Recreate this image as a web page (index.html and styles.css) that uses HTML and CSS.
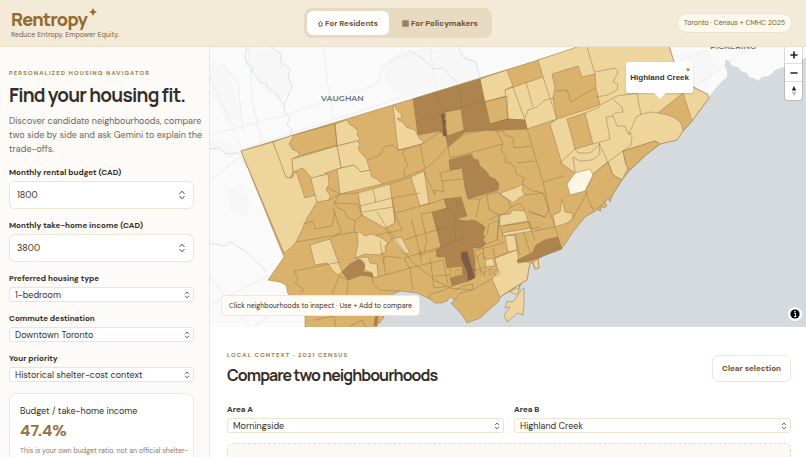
FILE: index.html
```html
<!DOCTYPE html>
<html lang="en">
<head>
<meta charset="utf-8">
<title>Rentropy</title>
<link rel="stylesheet" href="styles.css">
</head>
<body>
<svg class="defs" aria-hidden="true">
  <symbol id="updown" viewBox="0 0 6 10"><path d="M.8 3.6 3 1.2l2.2 2.4M.8 6.4 3 8.8l2.2-2.4" fill="none" stroke="#4a443c" stroke-width="1" stroke-linecap="round" stroke-linejoin="round"/></symbol>
</svg>
<header class="topbar">
  <div class="brand">
    <div class="brand-name">Rentropy<svg class="spark" viewBox="0 0 8 8" aria-hidden="true"><path d="M4 0 5.3 2.7 8 4 5.3 5.3 4 8 2.7 5.3 0 4 2.7 2.7Z"/></svg></div>
    <div class="tagline">Reduce Entropy. Empower Equity.</div>
  </div>
  <nav class="tabs">
    <button class="tab tab-active" type="button"><svg class="tab-icon" viewBox="0 0 5 7" aria-hidden="true"><path d="M.3 3.7 2.5 1.5l2.2 2.2M1 3.2v2.9h3V3.2" fill="none" stroke="currentColor" stroke-width=".9"/></svg>For Residents</button>
    <button class="tab" type="button"><svg class="tab-icon tab-icon-wide" viewBox="0 0 7 7" aria-hidden="true"><path d="M.5.5h6v6h-6z" fill="#a58a68"/><path d="M.5 2.5h6M.5 4.5h6M2.5.5v6M4.5.5v6M.5.5h6v6h-6z" stroke="#8b6a45" stroke-width=".4" fill="none"/></svg>For Policymakers</button>
  </nav>
  <span class="source">Toronto · Census + CMHC 2025</span>
</header>
<div class="shell">
  <aside class="sidebar">
    <p class="eyebrow">Personalized housing navigator</p>
    <h1>Find your housing fit.</h1>
    <p class="intro">Discover candidate neighbourhoods, compare two side by side and ask Gemini to explain the trade-offs.</p>
    <form class="fields">
      <div class="field"><label for="rent">Monthly rental budget (CAD)</label><div class="control"><input id="rent" type="number" value="1800"><svg class="chev"><use href="#updown"/></svg></div></div>
      <div class="field"><label for="income">Monthly take-home income (CAD)</label><div class="control"><input id="income" type="number" value="3800"><svg class="chev"><use href="#updown"/></svg></div></div>
      <div class="field"><label for="type">Preferred housing type</label><div class="control"><select id="type"><option>1-bedroom</option></select><svg class="chev chev-small"><use href="#updown"/></svg></div></div>
      <div class="field"><label for="dest">Commute destination</label><div class="control"><select id="dest"><option>Downtown Toronto</option></select><svg class="chev chev-small"><use href="#updown"/></svg></div></div>
      <div class="field"><label for="priority">Your priority</label><div class="control"><select id="priority"><option>Historical shelter-cost context</option></select><svg class="chev chev-small"><use href="#updown"/></svg></div></div>
    </form>
    <section class="ratio">
      <p class="ratio-label">Budget / take-home income</p>
      <p class="ratio-value">47.4%</p>
      <p class="ratio-note">This is your own budget ratio, not an official shelter-cost measure.</p>
    </section>
  </aside>
  <main class="content">
    <section class="map">
      <svg class="map-canvas" viewBox="210 47 596 280" preserveAspectRatio="xMidYMid slice" role="img" aria-label="Toronto neighbourhoods">
        <rect class="land" x="210" y="47" width="596" height="280"/>
        <g class="park">
          <path d="M248 48 280 50 292 80 284 100 262 88 246 66Z"/><path d="M388 60 402 52 452 48 478 62 478 78 400 101 384 80Z"/><path d="M210 58 226 68 244 120 226 120 210 90Z"/><path d="M210 138 232 144 242 152 230 158 210 150Z"/><path d="M226 190 240 184 250 200 246 218 230 210Z"/><path d="M676 55 700 50 720 58 706 88 692 84Z"/>
        </g>
        <g class="roads">
          <path d="M210 135 282 116 340 97 378 84 383 66 410 51"/><path d="M240 150 330 121 372 107 400 98"/><path d="M249 47 252 100 262 142"/><path d="M222 63 238 84 243 130"/><path d="M324 47 326 72 333 119"/><path d="M210 182 238 158"/><path d="M210 305 284 268"/><path d="M210 277 250 327"/><path d="M254 327 300 290"/><path d="M430 47 436 90"/><path d="M390 61 428 48"/><path d="M690 90 720 68 750 47"/><path d="M680 60 716 48"/>
        </g>
        <g class="creeks">
          <path d="M247 47 245 56 247 64 253 67 252 72 258 78 260 83 266 83 268 88 275 93 280 100 284 105 285 112 290 118 287 124 292 130 290 136"/><path d="M271 47 281 54 280 62 290 68 288 78 292 85 289 94 284 105"/><path d="M210 149 220 148 226 154 238 153 243 160 247 168"/><path d="M210 243 224 246 230 242 244 250 252 258 262 266 266 272"/><path d="M410 50 424 60 434 69 444 68 450 76 458 83"/><path d="M458 47 464 58 476 62 480 78"/>
        </g>
        <path class="border-line" d="M210 77 228 115 242 151"/>
        <path class="water" d="M806 58V327H376L385 298 400 291 420 280 500 270 550 240 600 165 660 125 700 101 709 97 716 88 722 81 727 77 727 72 725 67 725 60 729 61 732 66 738 67 741 71 747 73 749 77 754 78 758 81 762 77 769 76 775 70 784 67 786 62 796 60Z"/>
        <text class="place" x="321" y="101">VAUGHAN</text>
        <text class="place" x="710" y="49">PICKERING</text>

        <path class="mid" d="M241 151 409 100 577 48 580 46H669L675 65 683 85 693 87 707 94 709 98 692 121 683 131 677 140 660 144 647 154 630 170 622 180 613 194 610 202 608 198 605 202 607 206 603 208 600 206 601 211 595 209 594 212 585 217 573 232 563 247 543 256 538 259 539 268 535 269 533 264 530 262 527 280 520 284 515 288 500 297 499 301 480 318 467 323 462 315 451 303 455 300 450 297 447 301 442 303 435 303 430 299 417 293 400 291 385 298 378 306 377 328H305V317L298 300 288 294 286 285 280 282 268 280 284 257Z"/>
        <path class="mid" d="M378 316 383 314 384 318 381 320 380 323 377 322Z"/>
        <path class="light" d="M521 283 519 289 514 289 510 292 517 295 521 290 524 288 524 305 523 315 518 313 507 322 504 315 510 307 505 308 507 301 513 302 518 295 520 284Z"/>
        <path class="light" d="M533 262 538 259 539 268 535 269Z"/>

        <g class="light">
          <path d="M241 151 273 142 283 167 286 177 292 178 296 171 305 198 316 195 317 202 307 218 302 230 296 242 292 247 284 253Z"/>
          <path d="M273 142 293 135 292 139 289 144 293 150 297 151 300 155 292 159 293 172 290 178 286 177Z"/>
          <path d="M335 124 347 120 350 125 353 126 358 131 357 135 360 139 357 141 337 146Z"/>
          <path d="M337 146 357 141 360 144 358 149 363 155 366 158 370 170 361 172 354 165 341 168Z"/>
          <path d="M292 159 337 146 341 168 325 173 324 176 320 175 318 178 311 178 305 170 302 168 296 171 293 172Z"/>
          <path d="M311 178 328 174 329 184 326 190 330 195 329 200 317 202 312 183Z"/>
          <path d="M337 169 354 165 361 172 370 170 372 177 377 179 382 184 340 194Z"/>
          <path d="M393 106 395 106 397 110 402 115 401 118 397 119 404 123 406 127 415 130 419 138 425 143 398 150Z"/>
          <path d="M480 79 507 70 513 86 505 90 507 96 484 102Z"/>
          <path d="M505 90 543 77 549 88 555 87 554 98 557 119 527 129 525 120 508 119Z"/>
          <path d="M538 60 580 46H669L675 65 683 85 693 87 707 94 709 98 692 121 683 131 677 140 660 144 655 141 623 151 626 165 628 168 622 180 613 175 608 162 588 178 575 173 562 164 550 124 557 119 543 77Z"/>
          <path d="M411 177 424 171 429 203 420 206Z"/>
          <path d="M358 193 390 184 395 223 385 228 362 215Z"/>
          <path d="M310 245 330 239 342 272 338 275 333 271 327 263 315 265Z"/>
          <path d="M357 233 360 232 365 236 371 234 377 236 382 238 388 243 385 247 386 252 378 255 365 254 355 258 358 243Z"/>
          <path d="M355 258 368 257 370 263 377 264 378 277 372 277 372 273 365 270 364 262Z"/>
          <path d="M392 239 401 237 410 253 405 254Z"/>
          <path d="M495 258 517 250 519 262 530 262 527 280 515 287 500 297 492 279 498 272Z"/>
          <path d="M505 236 515 235 517 250 508 252Z"/>
          <path d="M500 215 510 214 513 210 525 211 528 221 500 226Z"/>
          <path d="M502 233 530 228 532 231 503 236Z"/>
          <path d="M503 192 515 188 523 184 522 190 525 195 519 198 513 203 506 198 500 195Z"/>
          <path d="M562 199 565 212 572 213 573 218 567 223 555 227 553 215 560 212Z"/>
          <path d="M485 260 493 258 495 266 486 267Z"/>
        </g>
        <g class="mid">
          <path d="M552 74 578 66 582 77 595 74 596 88 600 105 557 119 553 98 555 87Z"/>
          <path d="M567 119 585 113 593 144 575 149Z"/>
          <path d="M658 113 683 93 692 121 683 131 682 126 680 122 675 118 668 115Z"/>
          <path d="M623 151 655 141 660 144 647 154 630 170 626 165Z"/>
          <path d="M588 178 608 162 613 175 622 180 613 194 594 212 585 191 593 175Z"/>
        </g>
        <path class="pale" d="M575 173 590 169 593 175 585 191 570 195 567 184Z"/>
        <g class="dark">
          <path d="M413 99 480 79 485 102 490 124 507 119 525 120 527 129 500 130 487 130 465 132 448 147 446 137 440 131 418 135 416 121Z"/>
          <path d="M449 160 471 154 474 159 478 160 480 166 486 171 490 177 495 179 499 184 498 190 485 194 468 199 465 188 462 168 450 170Z"/>
          <path d="M444 199 461 197 467 216 456 219 449 215Z"/>
          <path d="M432 212 447 208 455 218 460 220 467 221 473 220 478 222 485 227 483 235 485 237 483 240 486 244 480 248 472 248 475 260 475 277 468 281 452 286 450 278 463 275 462 266 447 268 445 257 437 257 436 250 441 247Z"/>
          <path d="M517 260 532 253 536 245 545 240 558 237 562 249 543 256 533 260 518 263Z"/>
          <path d="M342 272 350 264 360 259 365 265 363 272 372 273 373 277 362 275 348 280Z"/>
        </g>
        <path class="mid" d="M445 112 461 109 464 130 447 136Z"/>
        <path class="deep" d="M441 114 445 114 444 119 446 121 445 127 447 136 443 136 443 128Z"/>
        <path class="deep" d="M461 252 467 251 472 268 475 278 468 281 467 272 461 258Z"/>
        <path class="dark" d="M375 317 378 315 377 325 374 326Z"/>
        <g class="lines">
          <path d="M436 92 443 114M458 86 462 108M416 121 441 114M445 112 483 101M513 87 525 120M526 82 533 107M525 118 528 110 537 107 545 100 554 98M484 102 507 96 508 119 490 124"/>
          <path d="M293 135 335 124 337 145 302 155M398 150 393 145 385 146 380 155 368 160M398 150 406 149 402 154 406 157 405 161 408 165 404 170 405 177 390 182 382 184M406 149 420 145 425 169M420 145 443 130M405 177 425 169 436 160 448 147 465 134 487 130 505 132"/>
          <path d="M448 147 450 158 503 144 496 130M503 144 501 150 506 156 505 162 511 163 515 168 516 174 525 178 522 183 530 190 543 193M503 134 513 138 514 148 531 146M517 163 535 161M527 129 543 182M543 182 564 176M543 182 549 210M440 173 461 168M440 173 442 181 462 179M442 181 444 192M435 195 435 190 444 192M424 171 435 195"/>
          <path d="M587 47 595 74M595 72 615 68 618 72 613 82 618 84 617 90 608 95 596 97M600 105 617 96 637 93 665 87 680 80M637 93 641 115M613 99 617 103 622 107 623 112 615 113 612 116M606 117 613 116 617 126 625 126 628 134 632 133M606 117 610 139 593 144M632 127 636 117 642 114 650 112 658 113M632 127 629 133 632 137 631 145 623 151 608 162 599 143M575 149 578 153 590 153 600 144M575 149 560 163M573 157 575 172M573 157 580 161 592 160 600 154 599 143M571 102 595 88M567 90 571 102M556 91 567 90M585 113 600 107"/>
          <path d="M327 187 340 194 358 193M340 194 329 200M340 194 334 203 358 204 362 215M334 203 338 208 345 211 347 217 355 221 362 215M303 224 313 221 315 229 332 226 335 210M296 242 355 232M330 239 341 232 333 208M355 221 354 232 357 233M373 189 376 203M360 206 392 198M363 212 393 207M390 184 411 177M377 212 387 228 412 262 435 280 450 288 472 290M385 247 392 239 385 228M395 223 395 213 432 203 444 199M395 213 392 198 420 193M383 263 385 256 402 258M380 241 386 275M378 277 410 268M294 271 340 262M294 271 298 279 295 283 304 290 300 293M332 294 339 276 348 280 347 294M372 277 373 284 380 290 400 291M410 268 413 290M404 258 450 244M314 320 334 316 336 327M350 326 362 320 366 327M376 235 402 230M402 230 395 214"/>
          <path d="M411 219 416 236 440 229M405 240 416 236 420 255 436 250M421 214 425 232 427 240 424 252M432 212 421 214M404 258 409 268 443 260M430 258 434 288M443 260 448 284M434 276 450 275M434 288 450 286M429 299 430 294 445 290 452 286M420 250 421 262M455 291 462 286 473 284 472 290 460 293 455 300M472 290 492 279M456 199 458 212 467 214M456 206 462 204M436 230 455 225M441 247 463 238 460 220M455 218 455 243M472 248 473 251 496 245 505 242M473 251 477 257 482 253 485 260M477 257 480 268M475 270 486 267M486 244 497 240 499 220 489 224 487 234 485 237M483 245 484 258M499 215 489 220M497 240 500 240"/>
          <path d="M468 199 480 199 476 218M480 199 487 195M487 195 498 192 508 200 511 207 506 213 500 215 493 212 489 210 487 195M511 207 520 203 525 211M525 195 543 193 549 210 545 217 528 211M545 217 530 212M549 210 555 227 534 231M528 221 535 240M503 226 530 222M515 235 520 255M524 233 530 253M530 222 532 229 540 227M555 227 558 237M573 218 588 191M500 226 503 236M499 215 497 240M508 252 495 258 493 248"/>
        </g>
        <text class="city" x="448" y="276">TORONTO</text>
      </svg>
      <div class="popup"><button class="popup-close" type="button" aria-label="Close popup">×</button><strong>Highland Creek</strong></div>
      <div class="map-controls">
        <button type="button" aria-label="Zoom in"><svg viewBox="0 0 10 10"><path d="M5 2v6M2 5h6" stroke="#222" stroke-width="1.6" stroke-linecap="round"/></svg></button>
        <button type="button" aria-label="Zoom out"><svg viewBox="0 0 10 10"><path d="M2 5h6" stroke="#222" stroke-width="1.6" stroke-linecap="round"/></svg></button>
        <button type="button" aria-label="Reset bearing"><svg viewBox="0 0 10 10"><path d="M2.8 4.5 5 0l2.2 4.5Z" fill="#222"/><path d="M2.8 5.8 5 10l2.2-4.2Z" fill="#bbb"/></svg></button>
      </div>
      <p class="hint">Click neighbourhoods to inspect · Use + Add to compare</p>
      <button class="info" type="button" aria-label="Attribution"><svg viewBox="0 0 10 10"><circle cx="5" cy="5" r="4.6"/><path d="M4.1 4.2h1.5v3.2M3.8 7.6h2.5" fill="none" stroke="#fff" stroke-width="1"/><circle cx="5" cy="2.6" r=".8" fill="#fff"/></svg></button>
    </section>
    <section class="compare">
      <div class="compare-head">
        <div>
          <p class="eyebrow">Local context · 2021 Census</p>
          <h2>Compare two neighbourhoods</h2>
        </div>
        <button class="clear" type="button">Clear selection</button>
      </div>
      <div class="areas">
        <div class="field"><label for="area-a">Area A</label><div class="control"><select id="area-a"><option>Morningside</option></select><svg class="chev chev-small"><use href="#updown"/></svg></div></div>
        <div class="field"><label for="area-b">Area B</label><div class="control"><select id="area-b"><option>Highland Creek</option></select><svg class="chev chev-small"><use href="#updown"/></svg></div></div>
      </div>
      <div class="result"><div class="result-inner"></div></div>
    </section>
  </main>
</div>
</body>
</html>
```
FILE: styles.css
```css
* { box-sizing: border-box; }
body {
  margin: 0;
  height: 100vh;
  display: flex;
  flex-direction: column;
  overflow: hidden;
  background: #fff;
  color: #352f27;
  font: 9px/14px "DM Sans", "Open Sans", sans-serif;
}
h1, h2, p { margin: 0; }
button, input, select { font: inherit; color: inherit; margin: 0; }
.defs { display: none; }

.topbar {
  flex: none;
  display: flex;
  justify-content: space-between;
  align-items: center;
  height: 47px;
  padding: 0 14px 0 11px;
  background: #f3ead8;
  border-bottom: 1px solid #eadfc9;
}
.brand-name {
  display: flex;
  align-items: flex-start;
  gap: 2px;
  padding-top: 2px;
  color: #946a2e;
  font: 800 18px/22px Manrope, Inter, sans-serif;
  letter-spacing: -0.04em;
}
.spark { width: 8px; height: 8px; fill: #946a2e; }
.tagline { font-size: 7px; line-height: 10px; color: #7d6446; }
.tabs {
  display: flex;
  gap: 2px;
  padding: 3px;
  border-radius: 8px;
  background: #e6dac1;
}
.tab {
  display: flex;
  align-items: center;
  gap: 2px;
  height: 24px;
  padding: 0 11px;
  border: 0;
  border-radius: 6px;
  background: transparent;
  color: #70502f;
  font-size: 8px;
  font-weight: 700;
}
.tab-active { background: #fff; }
.tab-icon { width: 5px; height: 7px; }
.tab-icon-wide { width: 7px; }
.source {
  padding: 2px 6px;
  border: 1px solid #eee2c9;
  border-radius: 10px;
  background: #fcf8ec;
  color: #795831;
  font-size: 7px;
}

.shell {
  flex: 1;
  min-height: 0;
  display: grid;
  grid-template-columns: 210px minmax(0, 1fr);
}
.sidebar {
  overflow: hidden;
  padding: 20px 6px 0 9px;
  border-right: 1px solid #ece6da;
  background: #fcfbf8;
}
.eyebrow {
  color: #9d7c48;
  font-size: 6px;
  line-height: 12px;
  font-weight: 700;
  letter-spacing: 0.18em;
  text-transform: uppercase;
}
h1, h2 { font-family: Manrope, Inter, sans-serif; font-weight: 700; }
h1 { padding-top: 3px; font-size: 19px; line-height: 26px; letter-spacing: -0.04em; }
.intro { padding-top: 6px; color: #706655; }

.fields { display: grid; gap: 9px; padding: 9px 9px 0 0; }
.field { display: grid; gap: 2px; }
.field label { font-size: 8px; font-weight: 700; }
.control { display: grid; align-items: center; }
.control > * { grid-area: 1 / 1; }
input, select {
  width: 100%;
  border: 1px solid #eee4d2;
  background: #fff;
  appearance: none;
}
input { height: 28px; padding: 0 7px; border-radius: 6px; -moz-appearance: textfield; }
input::-webkit-inner-spin-button { appearance: none; }
select { height: 15px; padding: 0 5px; border-radius: 3px; line-height: 12px; }
.chev { justify-self: end; width: 6px; height: 10px; margin-right: 9px; pointer-events: none; }
.chev-small { height: 8px; margin-right: 4px; }

.ratio {
  margin: 11px 9px 0 0;
  padding: 10px 2px 10px 10px;
  border: 1px solid #efe7d9;
  border-radius: 8px;
  background: #fff;
}
.ratio-label { font-size: 9px; }
.ratio-value { padding-top: 2px; color: #99703a; font-size: 16px; line-height: 22px; font-weight: 700; }
.ratio-note { padding-top: 3px; color: #857968; font-size: 7px; line-height: 12px; }

.content { min-width: 0; overflow: hidden; }
.map { position: relative; height: 280px; overflow: hidden; }
.map-canvas { display: block; width: 100%; height: 100%; }
.land { fill: #f9faf9; }
.water { fill: #d4dadd; }
.park { fill: #f6f7f6; }
.roads { fill: none; stroke: #eeefef; stroke-width: 1.2; }
.creeks { fill: none; stroke: #dce3e7; stroke-width: 1; }
.border-line { fill: none; stroke: #e8d9d9; stroke-width: .7; stroke-dasharray: 1 1; }
.light, .mid, .dark, .deep, .pale { stroke: #94784b; stroke-width: .5; stroke-linejoin: round; }
.light { fill: #edd59b; }
.mid { fill: #dab26b; }
.dark { fill: #ae834e; }
.deep { fill: #7e5b44; }
.pale { fill: #fdf6e4; }
.lines { fill: none; stroke: #94784b; stroke-width: .5; stroke-linejoin: round; }
.place { fill: #69737d; font: 600 8px Montserrat, "Open Sans", sans-serif; }
.city { fill: #8b6a3c; fill-opacity: .45; font: 9px Montserrat, "Open Sans", sans-serif; letter-spacing: 1px; }

.popup {
  position: absolute;
  top: 15px;
  right: 113px;
  padding: 8px 4px;
  border-radius: 2px;
  background: #fff;
  box-shadow: 0 1px 2px #0002;
  color: #333;
  font: 700 8px/15px "Liberation Sans", sans-serif;
}
.popup::after {
  content: "";
  position: absolute;
  top: 100%;
  left: 50%;
  margin-left: -6px;
  border: 6px solid transparent;
  border-top-color: #fff;
  border-bottom: 0;
}
.popup-close {
  position: absolute;
  top: 4px;
  right: 3px;
  padding: 0;
  border: 0;
  background: none;
  font: 7px/7px "Liberation Sans", sans-serif;
}
.map-controls {
  position: absolute;
  top: -1px;
  right: 4px;
  display: grid;
  border-radius: 3px;
  background: #fff;
  box-shadow: 0 0 0 1px #0002;
}
.map-controls button {
  display: grid;
  place-items: center;
  width: 17px;
  height: 18px;
  padding: 0;
  border: 0;
  border-bottom: 1px solid #ddd;
  background: none;
}
.map-controls button:last-child { border: 0; }
.map-controls svg { width: 10px; height: 10px; }
.hint {
  position: absolute;
  left: 11px;
  bottom: 11px;
  padding: 3px 7px 2px;
  border: 1px solid #f2e7cf;
  border-radius: 4px;
  background: #fffcf5;
  font-size: 7px;
  line-height: 14px;
}
.info {
  position: absolute;
  right: 4px;
  bottom: 6px;
  display: grid;
  width: 14px;
  height: 14px;
  padding: 2px;
  border: 0;
  border-radius: 50%;
  background: #fff;
}

.compare { padding: 22px 15px 0 17px; }
.compare-head { display: flex; justify-content: space-between; align-items: center; }
h2 { padding-top: 2px; font-size: 16px; line-height: 24px; letter-spacing: -0.06em; }
.clear {
  height: 27px;
  padding: 0 9px;
  border: 1px solid #eee5da;
  border-radius: 6px;
  background: #fff;
  color: #70502f;
  font-size: 8px;
  font-weight: 700;
}
.areas { display: grid; grid-template-columns: 1fr 1fr; gap: 10px; padding-top: 15px; }
.result {
  margin-top: 10px;
  padding: 13px 17px;
  border: 1px dashed #e5dac8;
  border-radius: 6px;
  background: #fcf9f4;
}
.result-inner { height: 20px; border-top: 1px solid #eee5d6; }
```
